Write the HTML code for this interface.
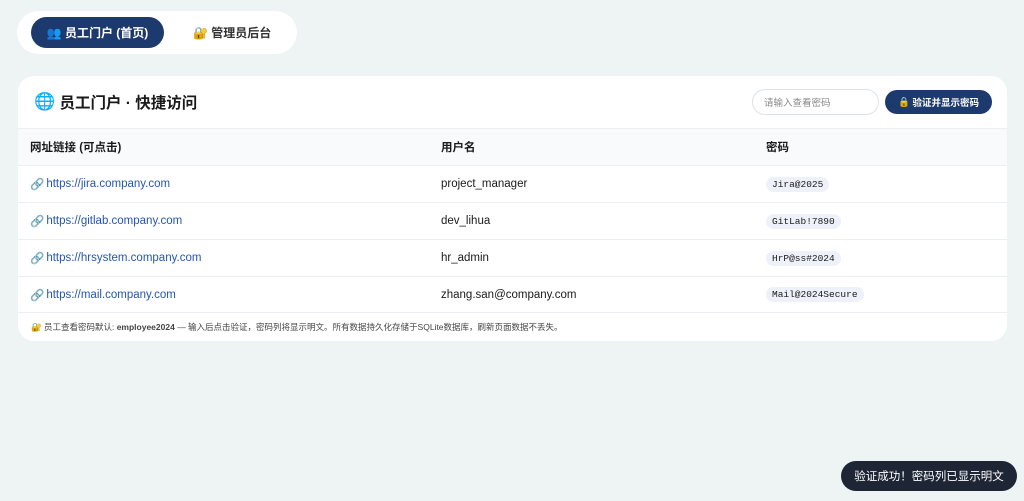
<!DOCTYPE html>
<html><head><meta charset="utf-8"><style>
*{box-sizing:border-box;margin:0;padding:0}
body{width:1024px;height:501px;background:#eef3f4;font-family:"Liberation Sans","Noto Sans CJK SC",sans-serif;position:relative;overflow:hidden;color:#1a1a1a}
.e{font-size:1em}
.nav{position:absolute;left:17px;top:11px;width:280px;height:43px;background:#fff;border-radius:22px}
.act{position:absolute;left:14px;top:6px;width:133px;height:31px;background:#1d3a6e;border-radius:16px;color:#fff;font-size:12px;font-weight:bold;display:flex;align-items:center;justify-content:center}
.adm{position:absolute;left:176px;top:6px;height:31px;font-size:12px;font-weight:bold;color:#333;display:flex;align-items:center}
.card{position:absolute;left:18px;top:76px;width:989px;height:265px;background:#fff;border-radius:16px;overflow:hidden}
.title{position:absolute;left:16px;top:14px;height:24px;font-size:15.5px;font-weight:bold;display:flex;align-items:center}
.title .e{font-size:17px}
.inp{position:absolute;left:734px;top:13px;width:127px;height:26px;border:1px solid #dde2e6;border-radius:13px;font-size:9.5px;color:#888;padding-left:11px;display:flex;align-items:center}
.btn{position:absolute;left:867px;top:14px;width:107px;height:24px;background:#1d3a6e;border-radius:12px;color:#fff;font-size:9.5px;font-weight:bold;display:flex;align-items:center;justify-content:center}
.row{position:absolute;left:0;width:989px;height:37px;border-top:1px solid #eceff2;font-size:11.5px}
.c{position:absolute;top:0;height:100%;display:flex;align-items:center;white-space:nowrap}
.hd{top:52px;background:#f8fafc;font-weight:bold}
.c1{left:12px}.c2{left:423px}.c3{left:748px}
a{color:#2456b0;text-decoration:none;margin-left:2px}
.pw{font-family:"Liberation Mono",monospace;font-size:9.5px;background:#eef1f9;border-radius:8px;padding:2px 6px;font-style:normal}
.foot{position:absolute;left:0;top:236px;width:989px;height:29px;border-top:1px solid #eceff2;font-size:8.5px;color:#444;padding-left:13px;display:flex;align-items:center;white-space:nowrap}
.toast{position:absolute;left:841px;top:461px;width:176px;height:30px;background:#1e2535;border-radius:15px;color:#fff;font-size:11.5px;display:flex;align-items:center;justify-content:center}
</style></head><body>
<div class="nav"><div class="act"><span class="e">👥</span>&nbsp;员工门户 (首页)</div><div class="adm"><span class="e">🔐</span>&nbsp;管理员后台</div></div>
<div class="card">
<div class="title"><span class="e">🌐</span>&nbsp;员工门户 · 快捷访问</div>
<div class="inp">请输入查看密码</div>
<div class="btn"><span class="e">🔒</span>&nbsp;验证并显示密码</div>
<div class="row hd"><div class="c c1">网址链接 (可点击)</div><div class="c c2">用户名</div><div class="c c3">密码</div></div>
<div class="row" style="top:89px"><div class="c c1"><span class="e">🔗</span><a>https://jira.company.com</a></div><div class="c c2">project_manager</div><div class="c c3"><i class="pw">Jira@2025</i></div></div>
<div class="row" style="top:126px"><div class="c c1"><span class="e">🔗</span><a>https://gitlab.company.com</a></div><div class="c c2">dev_lihua</div><div class="c c3"><i class="pw">GitLab!7890</i></div></div>
<div class="row" style="top:163px"><div class="c c1"><span class="e">🔗</span><a>https://hrsystem.company.com</a></div><div class="c c2">hr_admin</div><div class="c c3"><i class="pw">HrP@ss#2024</i></div></div>
<div class="row" style="top:200px;height:36px"><div class="c c1"><span class="e">🔗</span><a>https://mail.company.com</a></div><div class="c c2">zhang.san@company.com</div><div class="c c3"><i class="pw">Mail@2024Secure</i></div></div>
<div class="foot"><span class="e">🔐</span>&nbsp;员工查看密码默认: <b>&nbsp;employee2024&nbsp;</b> — 输入后点击验证，密码列将显示明文。所有数据持久化存储于SQLite数据库，刷新页面数据不丢失。</div>
</div>
<div class="toast">验证成功！密码列已显示明文</div>
</body></html>
